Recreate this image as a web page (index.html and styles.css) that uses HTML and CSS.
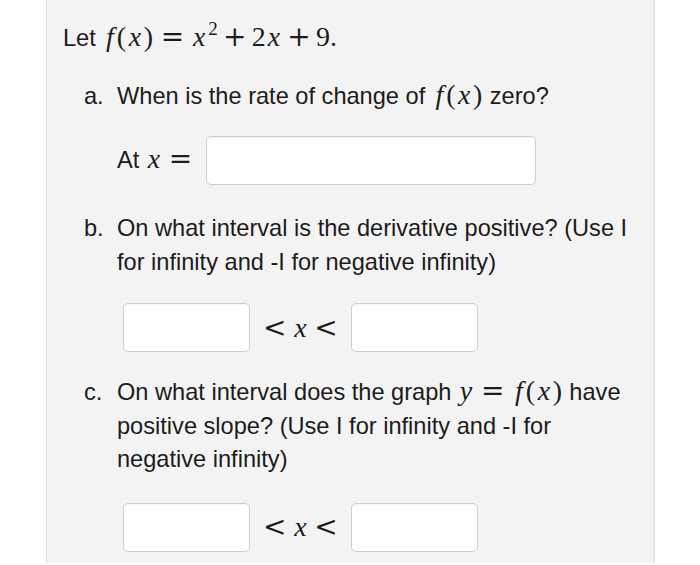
FILE: index.html
```html
<!DOCTYPE html>
<html>
<head>
<meta charset="utf-8">
<link rel="stylesheet" href="styles.css">
</head>
<body>
<div class="panel">
  <p class="intro">Let <span class="m"><span class="mi f">f</span><span class="mp">(</span><span class="mi">x</span><span class="mp">)</span><span class="mr">=</span><span class="mi">x</span><sup>2</sup><span class="mb">+</span>2<span class="mi">x</span><span class="mb">+</span>9.</span></p>
  <div class="item item-a">
    <div class="q"><span class="mk">a.</span><span class="qt">When is the rate of change of <span class="m"><span class="mi f">f</span><span class="mp">(</span><span class="mi">x</span><span class="mp">)</span></span> zero?</span></div>
    <div class="row row-a"><span class="lbl">At <span class="m"><span class="mi">x</span><span class="mr">=</span></span></span><span class="box box-wide"></span></div>
  </div>
  <div class="item item-b">
    <div class="q"><span class="mk">b.</span><span class="qt">On what interval is the derivative positive? (Use I for infinity and -I for negative infinity)</span></div>
    <div class="row row-int"><span class="box box-sm"></span><span class="m rel"><span class="mo">&lt;</span><span class="mi">x</span><span class="mo">&lt;</span></span><span class="box box-sm"></span></div>
  </div>
  <div class="item item-c">
    <div class="q"><span class="mk">c.</span><span class="qt">On what interval does the graph <span class="m"><span class="mi">y</span><span class="mr">=</span><span class="mi f">f</span><span class="mp">(</span><span class="mi">x</span><span class="mp">)</span></span> have positive slope? (Use I for infinity and -I for negative infinity)</span></div>
    <div class="row row-int"><span class="box box-sm"></span><span class="m rel"><span class="mo">&lt;</span><span class="mi">x</span><span class="mo">&lt;</span></span><span class="box box-sm"></span></div>
  </div>
</div>
</body>
</html>
```

FILE: styles.css
```css
html, body {
  margin: 0;
  padding: 0;
  background: #ffffff;
}
body {
  font-family: "Liberation Sans", Arial, sans-serif;
  font-size: 23.6px;
  line-height: 33.5px;
  color: #1c1c1c;
}
.panel {
  margin-left: 46px;
  width: 609px;
  height: 563px;
  box-sizing: border-box;
  background: #f3f3f3;
  border-left: 1px solid #dedede;
  border-right: 2px solid #e6e6e6;
  padding: 22px 0 0 16px;
}
.intro {
  margin: 0;
}
.m {
  font-family: "Liberation Serif", "Times New Roman", serif;
  font-size: 28px;
  line-height: 1;
}
.mi {
  font-style: italic;
  padding: 0 0.064em;
}
.mi.f {
  padding: 0 0.08em 0 0.13em;
}
.mp {
  padding: 0 0.028em;
}
.mr,
.mb,
.mo {
  font-family: "DejaVu Serif", serif;
  line-height: 1;
}
.mr {
  margin: 0 0.248em;
}
.mb {
  margin: 0 0.192em;
}
.m sup {
  font-size: 19px;
  line-height: 0;
  vertical-align: 11px;
  margin-left: 1px;
}
.item {
  margin-left: 21px;
}
.q {
  display: flex;
}
.mk {
  width: 33px;
  flex: none;
}
.qt {
  width: 525px;
  flex: none;
}
.item-a {
  margin-top: 24px;
}
.item-b {
  margin-top: 27px;
}
.item-c {
  margin-top: 24px;
}
.row {
  display: flex;
  align-items: center;
  margin-left: 33px;
}
.row-a {
  margin-top: 23px;
}
.row-a .mr {
  margin-right: 0;
}
.lbl {
  margin-right: 14px;
}
.item-b .row-int {
  margin-top: 24px;
}
.item-c .row-int {
  margin-top: 26px;
}
.row-int {
  padding-left: 6px;
}
.rel {
  margin: 0 13px 0 13px;
}
.rel .mi {
  margin: 0 0.21em;
}
.box {
  display: block;
  height: 49px;
  box-sizing: border-box;
  background: #ffffff;
  border: 1px solid #cdcdcd;
  border-radius: 5px;
  box-shadow: inset 0 1px 1px rgba(0, 0, 0, 0.04);
}
.box-wide {
  width: 330px;
}
.box-sm {
  width: 127px;
}
```
